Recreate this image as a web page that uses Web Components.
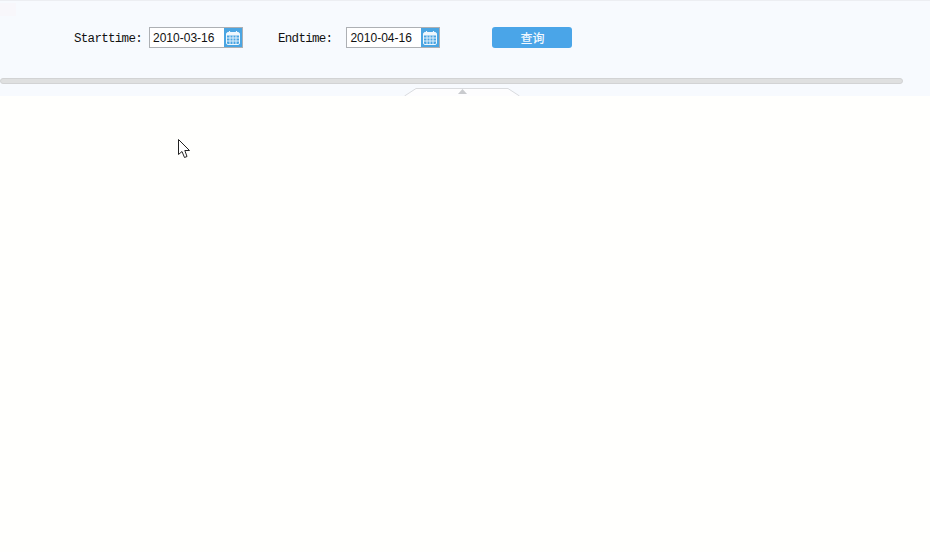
<!DOCTYPE html>
<html>
<head>
<meta charset="utf-8">
<title>Query</title>
<style>
  html, body { margin: 0; padding: 0; background: #fffffd; }
  body { height: 552px; overflow: hidden; position: relative; }
</style>
</head>
<body>
<query-panel>
  <date-field label="Starttime:" value="2010-03-16" gap="7"></date-field>
  <date-field label="Endtime:" value="2010-04-16" gap="14" style="margin-left:35px"></date-field>
  <query-button style="margin-left:52px">查询</query-button>
</query-panel>
<mouse-cursor></mouse-cursor>

<script>
class QueryPanel extends HTMLElement {
  constructor() {
    super();
    this.attachShadow({mode: 'open'}).innerHTML = `
      <style>
        :host {
          display: block;
          height: 96px;
          box-sizing: border-box;
          background: #f7fafe;
          border-top: 1px solid #eceef2;
          position: relative;
        }
        .row {
          display: flex;
          align-items: center;
          height: 47px;
          padding-top: 26px;
          padding-left: 74px;
          box-sizing: border-box;
        }
        .bar {
          width: 903px;
          height: 6px;
          margin-top: 30px;
          background: #dfe0e0;
          border: 1px solid #d2d3d4;
          border-radius: 3px;
          box-sizing: border-box;
        }
        .tab {
          position: absolute;
          left: 404px;
          top: 87px;
          width: 116px;
          height: 8px;
        }
        .tint {
          position: absolute;
          left: 0;
          top: 2px;
          width: 16px;
          height: 13px;
          background: #f8f7fb;
        }
      </style>
      <div class="tint"></div>
      <div class="row"><slot></slot></div>
      <div class="bar"></div>
      <svg class="tab" viewBox="0 0 116 8">
        <path d="M0.5 8 L12 0.5 H104 L115.5 8" fill="#fdfdfe" stroke="#d9dbde"/>
        <path d="M54 6 L58.5 1 L63 6 Z" fill="#c9cbce"/>
      </svg>
    `;
  }
}

class DateField extends HTMLElement {
  constructor() {
    super();
    this.shadowDOM = this.attachShadow({mode: 'open'});
  }

  connectedCallback() {
    this.shadowDOM.innerHTML = `
      <style>
        :host {
          display: inline-flex;
          align-items: center;
        }
        label {
          font: 12.5px "Liberation Mono", monospace;
          letter-spacing: -0.7px;
          color: #111;
          margin-right: ${this.getAttribute('gap')}px;
          padding-top: 2px;
          white-space: pre;
        }
        .box {
          display: flex;
          height: 21px;
          box-sizing: border-box;
          border: 1px solid #adb0b4;
          background: #fff;
        }
        .value {
          width: 74px;
          box-sizing: border-box;
          padding-left: 3px;
          font: 12px/21px "Liberation Sans", sans-serif;
          color: #111;
        }
        .icon {
          width: 18px;
          height: 19px;
          background: #4aa5e2;
          display: flex;
          align-items: center;
          justify-content: center;
        }
      </style>
      <label>${this.getAttribute('label')}</label>
      <div class="box">
        <div class="value">${this.getAttribute('value')}</div>
        <div class="icon">
          <svg width="14" height="14" viewBox="0 0 14 14">
            <rect x="0.5" y="1.5" width="13" height="12" rx="1.5" fill="none" stroke="#eef7fd"/>
            <rect x="1" y="2" width="12" height="2.5" fill="#eef7fd"/>
            <path d="M3.5 0V2.5M10.5 0V2.5" stroke="#eef7fd" stroke-width="1.2"/>
            <path d="M1 7H13M1 10H13M4 4.5V13M7 4.5V13M10 4.5V13" stroke="#e0f0fb" stroke-width="1"/>
          </svg>
        </div>
      </div>
    `;
  }
}

class QueryButton extends HTMLElement {
  constructor() {
    super();
    this.attachShadow({mode: 'open'}).innerHTML = `
      <style>
        :host {
          display: inline-block;
          width: 80px;
          height: 21px;
          background: #4aa5e8;
          border-radius: 3px;
          color: #f2f8fe;
          text-align: center;
          font: 500 12px/21px "Noto Sans CJK SC", sans-serif;
        }
      </style>
      <slot></slot>
    `;
  }
}

class MouseCursor extends HTMLElement {
  constructor() {
    super();
    this.attachShadow({mode: 'open'}).innerHTML = `
      <style>
        :host {
          position: absolute;
          left: 178px;
          top: 139px;
          width: 13px;
          height: 20px;
          display: block;
        }
      </style>
      <svg width="13" height="20" viewBox="0 0 13 20">
        <path d="M0.5 0.5 V15.5 L4 12.5 L6.5 18.5 L9 17.5 L6.8 11.5 H11.5 Z" fill="#fff" stroke="#222" stroke-width="1"/>
      </svg>
    `;
  }
}

customElements.define('query-panel', QueryPanel);
customElements.define('date-field', DateField);
customElements.define('query-button', QueryButton);
customElements.define('mouse-cursor', MouseCursor);
</script>
</body>
</html>
